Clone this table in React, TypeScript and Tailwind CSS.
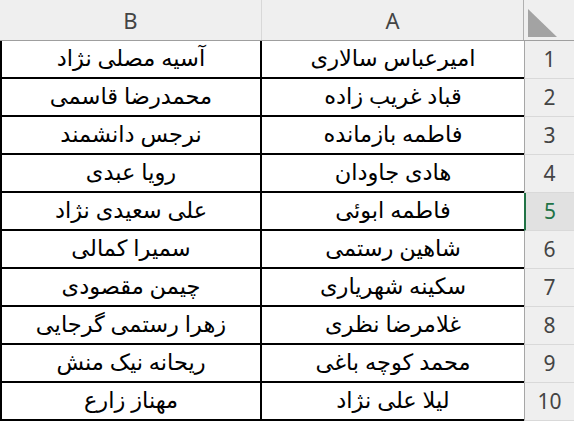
import React from 'react';

const rows: [string, string][] = [
  ['امیرعباس سالاری', 'آسیه مصلی نژاد'],
  ['قباد غریب زاده', 'محمدرضا قاسمی'],
  ['فاطمه بازمانده', 'نرجس دانشمند'],
  ['هادی جاودان', 'رویا عبدی'],
  ['فاطمه ابوئی', 'علی سعیدی نژاد'],
  ['شاهین رستمی', 'سمیرا کمالی'],
  ['سکینه شهریاری', 'چیمن مقصودی'],
  ['غلامرضا نظری', 'زهرا رستمی گرجایی'],
  ['محمد کوچه باغی', 'ریحانه نیک منش'],
  ['لیلا علی نژاد', 'مهناز زارع'],
];

const SELECTED = 5;

export default function App() {
  return (
    <div
      className="w-[574px] h-[422px] bg-white overflow-hidden"
      style={{ fontFamily: '"Noto Sans", "DejaVu Sans", sans-serif' }}
    >
      {/* Column headers */}
      <div className="grid grid-cols-[262px_262px_50px] h-[41px] bg-[#efefef] border-b border-[#9f9f9f]">
        <div className="flex items-end justify-center pb-[3px] border-r border-[#d8d8d8] text-[22px] text-[#444]">
          B
        </div>
        <div className="flex items-end justify-center pb-[3px] border-r border-[#b0b0b0] text-[22px] text-[#444]">
          A
        </div>
        <div className="relative">
          <svg className="absolute left-[4px] top-[9px]" width="29" height="28" viewBox="0 0 29 28">
            <polygon points="0,0 0,28 29,28" fill="#a3a3a3" />
          </svg>
        </div>
      </div>

      {/* Rows */}
      {rows.map(([a, b], i) => {
        const n = i + 1;
        const selected = n === SELECTED;
        return (
          <div key={n} className="grid grid-cols-[262px_262px_50px] h-[38px]" dir="ltr">
            <div
              dir="rtl"
              className="flex items-center justify-center border-l-2 border-b-2 border-r-2 border-black text-[22.5px] text-black leading-none pb-[2px]"
            >
              {b}
            </div>
            <div
              dir="rtl"
              className="flex items-center justify-center border-b-2 border-black text-[22.5px] text-black leading-none pb-[2px]"
            >
              {a}
            </div>
            <div
              className={`flex items-center justify-center border-b border-[#d9d9d9] text-[21px] ${
                selected
                  ? 'bg-[#e1e1e1] text-[#217346] border-l-2 border-l-[#217346]'
                  : 'bg-[#efefef] text-[#444] border-l border-l-[#a6a6a6]'
              }`}
            >
              {n}
            </div>
          </div>
        );
      })}
    </div>
  );
}
